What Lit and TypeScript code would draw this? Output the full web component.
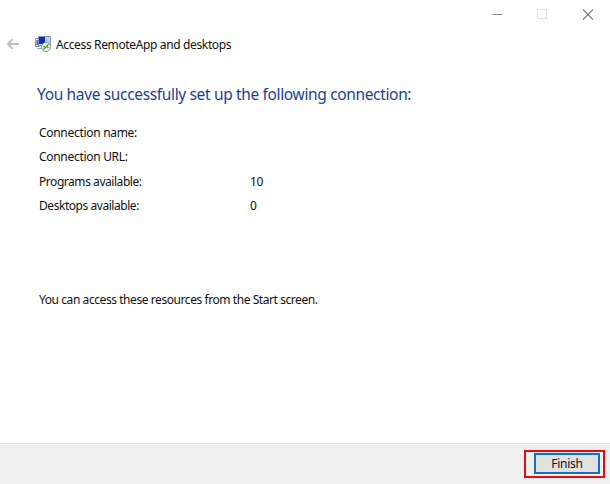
import { LitElement, html, css } from "lit";
import { customElement } from "lit/decorators.js";

interface Detail {
  label: string;
  value: string;
}

@customElement("app-root")
export class AppRoot extends LitElement {
  static styles = css`
    :host {
      display: flex;
      flex-direction: column;
      box-sizing: border-box;
      width: 610px;
      height: 484px;
      overflow: hidden;
      background: #fff;
      color: #101010;
      font: 12px/16px "Noto Sans", "Open Sans", sans-serif;
      letter-spacing: -0.43px;
      white-space: nowrap;
    }
    svg { display: block; }
    .caption {
      display: flex;
      justify-content: flex-end;
      height: 29px;
      padding-right: 0;
    }
    .control {
      display: grid;
      place-items: center;
      width: 45px;
      height: 28px;
    }
    .header {
      display: flex;
      align-items: center;
      height: 30px;
      padding-left: 6px;
    }
    .back { width: 14px; }
    .logo { margin: 0 5px 0 15px; }
    .title { letter-spacing: -0.36px; padding-top: 2px; }
    main {
      flex: 1;
      padding: 23px 37px 0;
    }
    h1 {
      margin: 0 0 17px;
      font-size: 15.5px;
      line-height: 24px;
      font-weight: 400;
      letter-spacing: -0.35px;
      color: #1c3f94;
    }
    dl { margin: 0 0 0 2px; }
    .row {
      display: grid;
      grid-template-columns: 211px 1fr;
      height: 24.4px;
      line-height: 20px;
      letter-spacing: -0.45px;
    }
    .row:nth-child(-n + 2) { letter-spacing: -0.3px; }
    dt, dd { margin: 0; }
    .note { margin: 71px 0 0 2px; }
    footer {
      display: flex;
      justify-content: flex-end;
      box-sizing: border-box;
      height: 41px;
      padding: 6px 5px 0 0;
      background: #f0f0f0;
      border-top: 1px solid #dfdfdf;
    }
    .marker {
      box-sizing: border-box;
      width: 81px;
      height: 28px;
      padding: 1px 3px 0 8px;
      border: 2px solid #e60a10;
    }
    button {
      display: block;
      box-sizing: border-box;
      width: 66px;
      height: 21px;
      padding: 0;
      border: 2px solid #0d70c4;
      background: #e1e1e1;
      color: inherit;
      font: inherit;
      letter-spacing: -0.25px;
    }
  `;

  private details: Detail[] = [
    { label: "Connection name:", value: "" },
    { label: "Connection URL:", value: "" },
    { label: "Programs available:", value: "10" },
    { label: "Desktops available:", value: "0" },
  ];

  render() {
    return html`
      <div class="caption">
        <div class="control">
          <svg width="11" height="11" viewBox="0 0 11 11"><path d="M.5 5.5h10" stroke="#858585" /></svg>
        </div>
        <div class="control">
          <svg width="11" height="11" viewBox="0 0 11 11"><path d="M.5.5h9v9h-9z" fill="none" stroke="#e2e2e2" /></svg>
        </div>
        <div class="control">
          <svg width="11" height="11" viewBox="0 0 11 11"><path d="M1 .5l10 10M11 .5l-10 10" stroke="#777" stroke-width="1.1" /></svg>
        </div>
      </div>
      <div class="header">
        <svg class="back" width="14" height="12" viewBox="0 0 14 12">
          <path d="M13 6H2M6.500 1.200L1.800 6l4.700 4.800" fill="none" stroke="#c0c0c0" stroke-width="2" />
        </svg>
        <svg class="logo" width="16" height="16" viewBox="0 0 16 16">
          <path d="M.5 2.500h4v8h-4z" fill="#eef3fb" stroke="#8592ad" />
          <path d="M1.500 4h1.500v5H1.500z" fill="#3d63c4" />
          <path d="M3.500.5h12v9h-12z" fill="#b9cdf0" stroke="#8494b8" />
          <path d="M4 1h6v7H4z" fill="#0b2fc0" />
          <path d="M2 12.500h5" stroke="#a0a8b8" />
          <circle cx="11" cy="11" r="4.500" fill="#f6f8f4" stroke="#858c85" />
          <path d="M8.500 10l2 1.500-2 1.800M13.500 8.500l-2 1.700 2 1.800" fill="none" stroke="#2a9d2a" stroke-width="1.200" />
        </svg>
        <span class="title">Access RemoteApp and desktops</span>
      </div>
      <main>
        <h1>You have successfully set up the following connection:</h1>
        <dl>
          ${this.details.map(
            (d) => html`<div class="row"><dt>${d.label}</dt><dd>${d.value}</dd></div>`,
          )}
        </dl>
        <p class="note">You can access these resources from the Start screen.</p>
      </main>
      <footer>
        <div class="marker"><button>Finish</button></div>
      </footer>
    `;
  }
}
